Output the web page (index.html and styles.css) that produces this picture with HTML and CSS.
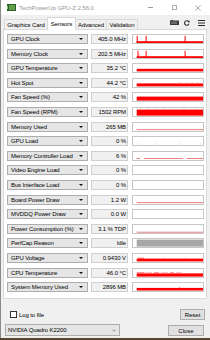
FILE: index.html
```html
<!DOCTYPE html>
<html>
<head>
<meta charset="utf-8">
<link rel="stylesheet" href="styles.css">
</head>
<body>
<div class="win">
  <div class="titlebar">
    <svg class="appicon" width="9" height="7" viewBox="0 0 9 7"><rect x="0" y="0" width="9" height="7" fill="#2e5e2a"/><rect x="2" y="1" width="6" height="5" fill="#5fa048"/><rect x="0" y="2" width="1" height="3" fill="#9ac88a"/></svg>
    <span class="title">TechPowerUp GPU-Z 2.56.0</span>
    <div class="ctrls">
      <span class="ctrl"><span class="min"></span></span>
      <span class="ctrl"><span class="max"></span></span>
      <span class="ctrl"><svg width="6" height="6" viewBox="0 0 6 6"><path d="M0.3 0.3L5.7 5.7M5.7 0.3L0.3 5.7" stroke="#9a9a9a" stroke-width="0.8"/></svg></span>
    </div>
  </div>
  <div class="tabbar">
    <div class="tabs">
      <span class="tab t-gc">Graphics Card</span>
      <span class="tab active t-se">Sensors</span>
      <span class="tab t-ad">Advanced</span>
      <span class="tab t-va">Validation</span>
    </div>
    <div class="tools">
      <svg class="cam" width="9" height="5" viewBox="0 0 9 5"><rect x="0" y="0.5" width="9" height="4.5" fill="#3a3a3a"/><rect x="1" y="0" width="2" height="1" fill="#3a3a3a"/><rect x="1.5" y="1.5" width="1" height="2.5" fill="#9a9a9a"/><rect x="3.5" y="1.5" width="1" height="2.5" fill="#9a9a9a"/><rect x="5.5" y="1.5" width="1" height="2.5" fill="#9a9a9a"/></svg>
      <svg class="ref" width="6" height="6" viewBox="0 0 6 6"><path d="M5 2.2A2.3 2.3 0 1 0 5 3.8" fill="none" stroke="#2a2a2a" stroke-width="1.1"/><path d="M3.6 1.2L5.6 0.6L5.4 2.8Z" fill="#2a2a2a"/></svg>
      <svg class="menu" width="7" height="6" viewBox="0 0 7 6"><rect x="0" y="0" width="7" height="1" fill="#2a2a2a"/><rect x="0" y="2.5" width="7" height="1" fill="#2a2a2a"/><rect x="0" y="5" width="7" height="1" fill="#2a2a2a"/></svg>
    </div>
  </div>
  <div class="pane">
    <div class="row"><div class="name">GPU Clock</div><div class="val">405.0 MHz</div><div class="graph"><svg viewBox="0 0 70 8"><rect x="3.7" y="6.2" width="66.3" height="1.8" fill="#f00"/><rect x="3.7" y="0.8" width="1" height="7.2" fill="#f00"/><rect x="12.6" y="0.8" width="1" height="7.2" fill="#f00"/><rect x="51.6" y="0.8" width="1" height="7.2" fill="#f00"/></svg></div></div>
    <div class="row"><div class="name">Memory Clock</div><div class="val">202.5 MHz</div><div class="graph"><svg viewBox="0 0 70 8"><rect x="3.7" y="6.2" width="66.3" height="1.8" fill="#f00"/><rect x="4.5" y="0.8" width="1" height="7.2" fill="#f00"/><rect x="12.6" y="0.8" width="1" height="7.2" fill="#f00"/><rect x="51.6" y="0.8" width="1" height="7.2" fill="#f00"/><rect x="6.5" y="4" width="0.7" height="3" fill="#f88"/></svg></div></div>
    <div class="row"><div class="name">GPU Temperature</div><div class="val">35.2 °C</div><div class="graph"><svg viewBox="0 0 70 8"><rect x="3.7" y="4.8" width="66.3" height="2.6" fill="#f00"/></svg></div></div>
    <div class="row"><div class="name">Hot Spot</div><div class="val">44.2 °C</div><div class="graph"><svg viewBox="0 0 70 8"><rect x="3.7" y="4.4" width="66.3" height="3" fill="#f00"/><rect x="47" y="3.6" width="1" height="1" fill="#f66"/><rect x="53" y="3.6" width="1" height="1" fill="#f66"/><rect x="59" y="3.6" width="1" height="1" fill="#f66"/><rect x="64" y="3.6" width="1" height="1" fill="#f66"/></svg></div></div>
    <div class="row"><div class="name">Fan Speed (%)</div><div class="val">42 %</div><div class="graph"><svg viewBox="0 0 70 8"><rect x="3.7" y="3.6" width="66.3" height="4" fill="#f00"/></svg></div></div>
    <div class="row"><div class="name">Fan Speed (RPM)</div><div class="val">1502 RPM</div><div class="graph"><svg viewBox="0 0 70 8"><rect x="3.7" y="1.6" width="66.3" height="6" fill="#f00"/><rect x="6" y="0.8" width="2" height="1" fill="#f88"/><rect x="14" y="0.8" width="2" height="1" fill="#f88"/><rect x="22" y="0.8" width="1" height="1" fill="#f88"/><rect x="30" y="0.8" width="2" height="1" fill="#f88"/><rect x="40" y="0.8" width="1" height="1" fill="#f88"/><rect x="50" y="0.8" width="2" height="1" fill="#f88"/><rect x="62" y="0.8" width="1" height="1" fill="#f88"/></svg></div></div>
    <div class="row"><div class="name">Memory Used</div><div class="val">265 MB</div><div class="graph"><svg viewBox="0 0 70 8"><rect x="3.7" y="6.4" width="66.3" height="0.7" fill="#e04848"/></svg></div></div>
    <div class="row"><div class="name">GPU Load</div><div class="val">0 %</div><div class="graph"><svg viewBox="0 0 70 8"><rect x="4.5" y="6.5" width="0.8" height="0.8" fill="#f0a0a0"/><rect x="23" y="6.5" width="0.8" height="0.8" fill="#f0a0a0"/><rect x="47" y="6.5" width="0.8" height="0.8" fill="#f0a0a0"/><rect x="67" y="6.5" width="0.8" height="0.8" fill="#f0a0a0"/></svg></div></div>
    <div class="row"><div class="name">Memory Controller Load</div><div class="val">6 %</div><div class="graph"><svg viewBox="0 0 70 8"><rect x="3.7" y="6.3" width="3.3" height="0.7" fill="#e04848"/><rect x="11" y="6.3" width="39.3" height="0.7" fill="#e04848"/><rect x="53.7" y="6.3" width="16.3" height="0.7" fill="#e04848"/></svg></div></div>
    <div class="row"><div class="name">Video Engine Load</div><div class="val">0 %</div><div class="graph"><svg viewBox="0 0 70 8"></svg></div></div>
    <div class="row"><div class="name">Bus Interface Load</div><div class="val">0 %</div><div class="graph"><svg viewBox="0 0 70 8"></svg></div></div>
    <div class="row"><div class="name">Board Power Draw</div><div class="val">1.2 W</div><div class="graph"><svg viewBox="0 0 70 8"><rect x="3.7" y="6.4" width="66.3" height="0.7" fill="#e04848"/></svg></div></div>
    <div class="row"><div class="name">MVDDQ Power Draw</div><div class="val">0.0 W</div><div class="graph"><svg viewBox="0 0 70 8"></svg></div></div>
    <div class="row"><div class="name">Power Consumption (%)</div><div class="val">3.1 % TDP</div><div class="graph"><svg viewBox="0 0 70 8"><rect x="3.7" y="6.8" width="66.3" height="0.7" fill="#e04848"/></svg></div></div>
    <div class="row"><div class="name">PerfCap Reason</div><div class="val">Idle</div><div class="graph"><svg viewBox="0 0 70 8"><rect x="3.7" y="0.6" width="66.3" height="7" fill="#a7a7a7"/></svg></div></div>
    <div class="row"><div class="name">GPU Voltage</div><div class="val">0.9430 V</div><div class="graph"><svg viewBox="0 0 70 8"><rect x="3.7" y="4.6" width="66.3" height="2.8" fill="#f00"/><rect x="5" y="3.8" width="6" height="1" fill="#f44"/><rect x="30" y="3.9" width="3" height="1" fill="#f88"/><rect x="52" y="3.9" width="3" height="1" fill="#f88"/></svg></div></div>
    <div class="row"><div class="name">CPU Temperature</div><div class="val">46.0 °C</div><div class="graph"><svg viewBox="0 0 70 8"><rect x="3.7" y="4.4" width="66.3" height="3.2" fill="#f00"/><rect x="3.7" y="3.4" width="8" height="1" fill="#f55"/><rect x="13" y="3.6" width="6" height="1" fill="#f66"/><rect x="21" y="3.4" width="5" height="1" fill="#f55"/><rect x="28" y="3.6" width="7" height="1" fill="#f66"/><rect x="37" y="3.4" width="4" height="1" fill="#f55"/><rect x="43" y="3.6" width="6" height="1" fill="#f66"/></svg></div></div>
    <div class="row"><div class="name">System Memory Used</div><div class="val">2896 MB</div><div class="graph"><svg viewBox="0 0 70 8"><rect x="3.7" y="4.9" width="66.3" height="2.6" fill="#f00"/><rect x="46" y="4.1" width="1" height="1" fill="#f66"/></svg></div></div>
  </div>
  <div class="footer">
    <div class="frow1">
      <span class="chk"></span><span class="chklabel">Log to file</span>
      <span class="btn reset">Reset</span>
    </div>
    <div class="frow2">
      <div class="combo"><span>NVIDIA Quadro K2200</span><svg class="chev" width="4" height="3" viewBox="0 0 4 3"><path d="M0.3 0.5L2 2.3L3.7 0.5" fill="none" stroke="#666" stroke-width="0.7"/></svg></div>
      <span class="btn close">Close</span>
    </div>
  </div>
</div>
</body>
</html>
```

FILE: styles.css
```css
* { box-sizing: border-box; margin: 0; padding: 0; }
html, body { width: 210px; height: 340px; overflow: hidden; }
body {
  background: #5b4634;
  font-family: "Liberation Sans", Arial, sans-serif;
  font-size: 6px;
  color: #000;
}
.win {
  width: 210px;
  height: 338px;
  background: #f0f0f0;
  border-left: 1px solid #8a8a8a;
  display: flex;
  flex-direction: column;
}
.titlebar {
  height: 15px;
  background: #fff;
  display: flex;
  align-items: center;
}
.appicon { display: block; margin-left: 6px; }
.title {
  margin-left: 3px;
  color: #9a9a9a;
  font-size: 6.2px;
  letter-spacing: -0.15px;
}
.ctrls { margin-left: auto; display: flex; height: 15px; }
.ctrl { width: 24px; display: flex; align-items: center; justify-content: center; }
.min { width: 5px; height: 1px; background: #9a9a9a; display: block; }
.max { width: 5px; height: 5px; border: 0.8px solid #b0b0b0; display: block; }

.tabbar {
  height: 14px;
  display: flex;
  align-items: flex-end;
  position: relative;
  z-index: 1;
}
.tabs { display: flex; align-items: flex-end; margin-left: 3px; }
.tab {
  height: 10px;
  border: 1px solid #d9d9d9;
  border-bottom: none;
  border-left: none;
  background: #f0f0f0;
  display: flex;
  align-items: center;
  justify-content: center;
  white-space: nowrap;
  letter-spacing: -0.1px;
}
.t-gc { width: 44px; border-left: 1px solid #d9d9d9; }
.t-se { width: 29px; }
.t-ad { width: 31px; }
.t-va { width: 31px; }
.tab.active {
  height: 13px;
  background: #fff;
  margin-bottom: -1px;
  border-left: 1px solid #d9d9d9;
  margin-left: -1px;
  padding-bottom: 1px;
}
.tools {
  margin-left: auto;
  height: 14px;
  display: flex;
  align-items: center;
  padding-top: 1px;
}
.tools svg { display: block; }
.cam { margin-right: 5px; }
.ref { margin-right: 8px; }
.menu { margin-right: 5px; }

.pane {
  margin: 0 3px 0 2px;
  height: 270px;
  border: 1px solid #d9d9d9;
  background: #fff;
  padding: 4px 2px 0 3px;
  display: flex;
  flex-direction: column;
  gap: 4.6px;
}
.row { display: flex; height: 10px; }
.name {
  width: 81px;
  height: 10px;
  border: 1px solid #adadad;
  background: #e6e6e6;
  display: flex;
  align-items: center;
  padding-left: 3px;
  position: relative;
  white-space: nowrap;
  letter-spacing: -0.12px;
}
.name::after {
  content: "";
  position: absolute;
  right: 4px;
  top: 3px;
  border-left: 2px solid transparent;
  border-right: 2px solid transparent;
  border-top: 2px solid #111;
}
.val {
  width: 37px;
  height: 10px;
  margin-left: 3px;
  border: 1px solid #cfcfcf;
  background: #f0f0f0;
  display: flex;
  align-items: center;
  justify-content: flex-end;
  padding-right: 1px;
  white-space: nowrap;
  letter-spacing: -0.1px;
}
.graph {
  width: 72px;
  height: 10px;
  margin-left: 4px;
  border: 1px solid #c6c6c6;
  background: #fff;
}
.graph svg { display: block; width: 70px; height: 8px; }

.footer { padding-top: 10px; }
.frow1 { height: 11px; display: flex; align-items: center; }
.chk {
  width: 7px;
  height: 7px;
  border: 1px solid #333;
  background: #fff;
  margin-left: 9px;
}
.chklabel { margin-left: 2px; letter-spacing: -0.1px; }
.btn {
  height: 11px;
  border: 1px solid #adadad;
  background: #e1e1e1;
  display: flex;
  align-items: center;
  justify-content: center;
}
.reset { width: 25px; margin-left: auto; margin-right: 5px; }
.frow2 { display: flex; margin-top: 4px; align-items: flex-start; }
.combo {
  width: 115px;
  height: 12px;
  margin-left: 4px;
  border: 1px solid #adadad;
  background: #e6e6e6;
  padding-left: 2px;
  display: flex;
  align-items: center;
  letter-spacing: -0.1px;
}
.chev { display: block; margin-left: auto; margin-right: 3px; }
.close { width: 36px; margin-left: auto; margin-right: 6px; margin-top: 1px; }
```
